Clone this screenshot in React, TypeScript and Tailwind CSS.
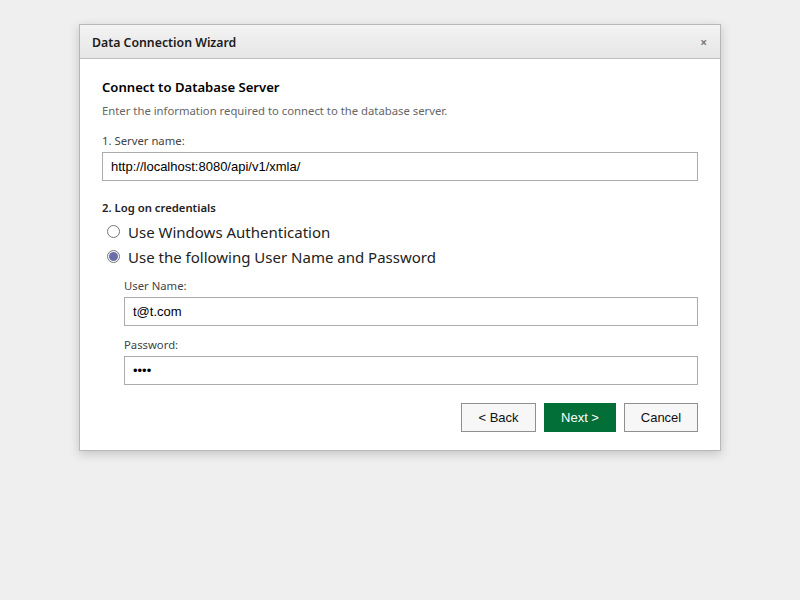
const labelClass = "block text-[11.3px] leading-[16px] text-[#444444]";
const inputClass =
  "block w-full h-[29px] border border-[#ababab] bg-white px-2 text-[13px] text-black font-['Liberation_Sans',sans-serif] outline-none";

const Radio = ({ checked, label }: { checked?: boolean; label: string }) => (
  <label className="flex items-center h-[25px] pl-[5px] text-[15px] text-[#222222]">
    <span className="flex items-center justify-center w-[13px] h-[13px] rounded-full border border-[#767676] bg-white">
      {checked && <span className="w-[9px] h-[9px] rounded-full bg-[#6a6fa8]" />}
    </span>
    <span className="ml-[8px] pt-[1px]">{label}</span>
  </label>
);

const App = () => {
  return (
    <div className="h-[600px] bg-[#efefef] pt-[24px] font-['Noto_Sans',sans-serif]">
      <div className="mx-auto w-[642px] h-[427px] border border-[#b8b8b8] bg-white shadow-[0_3px_10px_rgba(0,0,0,0.18)]">
        {/* header */}
        <div className="flex items-center justify-between h-[34px] pl-[12px] pr-[13px] pt-[2px] border-b border-[#bdbdbd] bg-gradient-to-b from-[#f3f3f3] to-[#e6e6e6]">
          <span className="pt-[2px] text-[12.3px] font-semibold text-[#1c1c1c]">Data Connection Wizard</span>
          <span className="text-[12px] text-[#7a7a7a] font-bold">×</span>
        </div>

        <div className="px-[22px] pt-[19px]">
          <h2 className="text-[13.1px] leading-[18px] font-semibold text-black">Connect to Database Server</h2>
          <p className="mt-[7px] text-[11.3px] leading-[16px] text-[#666666]">
            Enter the information required to connect to the database server.
          </p>

          <label className={`${labelClass} mt-[14px]`}>1. Server name:</label>
          <input className={`${inputClass} mt-[3px]`} defaultValue="http://localhost:8080/api/v1/xmla/" />

          <div className="mt-[19px] text-[11.3px] leading-[16px] font-semibold text-[#222222]">2. Log on credentials</div>
          <div className="mt-[3px]">
            <Radio label="Use Windows Authentication" />
            <Radio checked label="Use the following User Name and Password" />
          </div>

          <div className="pl-[22px] mt-[9px]">
            <label className={labelClass}>User Name:</label>
            <input className={`${inputClass} mt-[3px]`} defaultValue="t@t.com" />
            <label className={`${labelClass} mt-[11px]`}>Password:</label>
            <input type="password" className={`${inputClass} mt-[3px]`} defaultValue="test" />
          </div>

          <div className="flex justify-end gap-[8px] mt-[18px] font-['Liberation_Sans',sans-serif] text-[13px]">
            <button className="w-[75px] h-[29px] border border-[#8f8f8f] bg-[#f7f7f7] text-[#111111]">&lt; Back</button>
            <button className="w-[72px] h-[29px] bg-[#026e38] text-white">Next &gt;</button>
            <button className="w-[74px] h-[29px] border border-[#8f8f8f] bg-[#f7f7f7] text-[#111111]">Cancel</button>
          </div>
        </div>
      </div>
    </div>
  );
};

export default App;
